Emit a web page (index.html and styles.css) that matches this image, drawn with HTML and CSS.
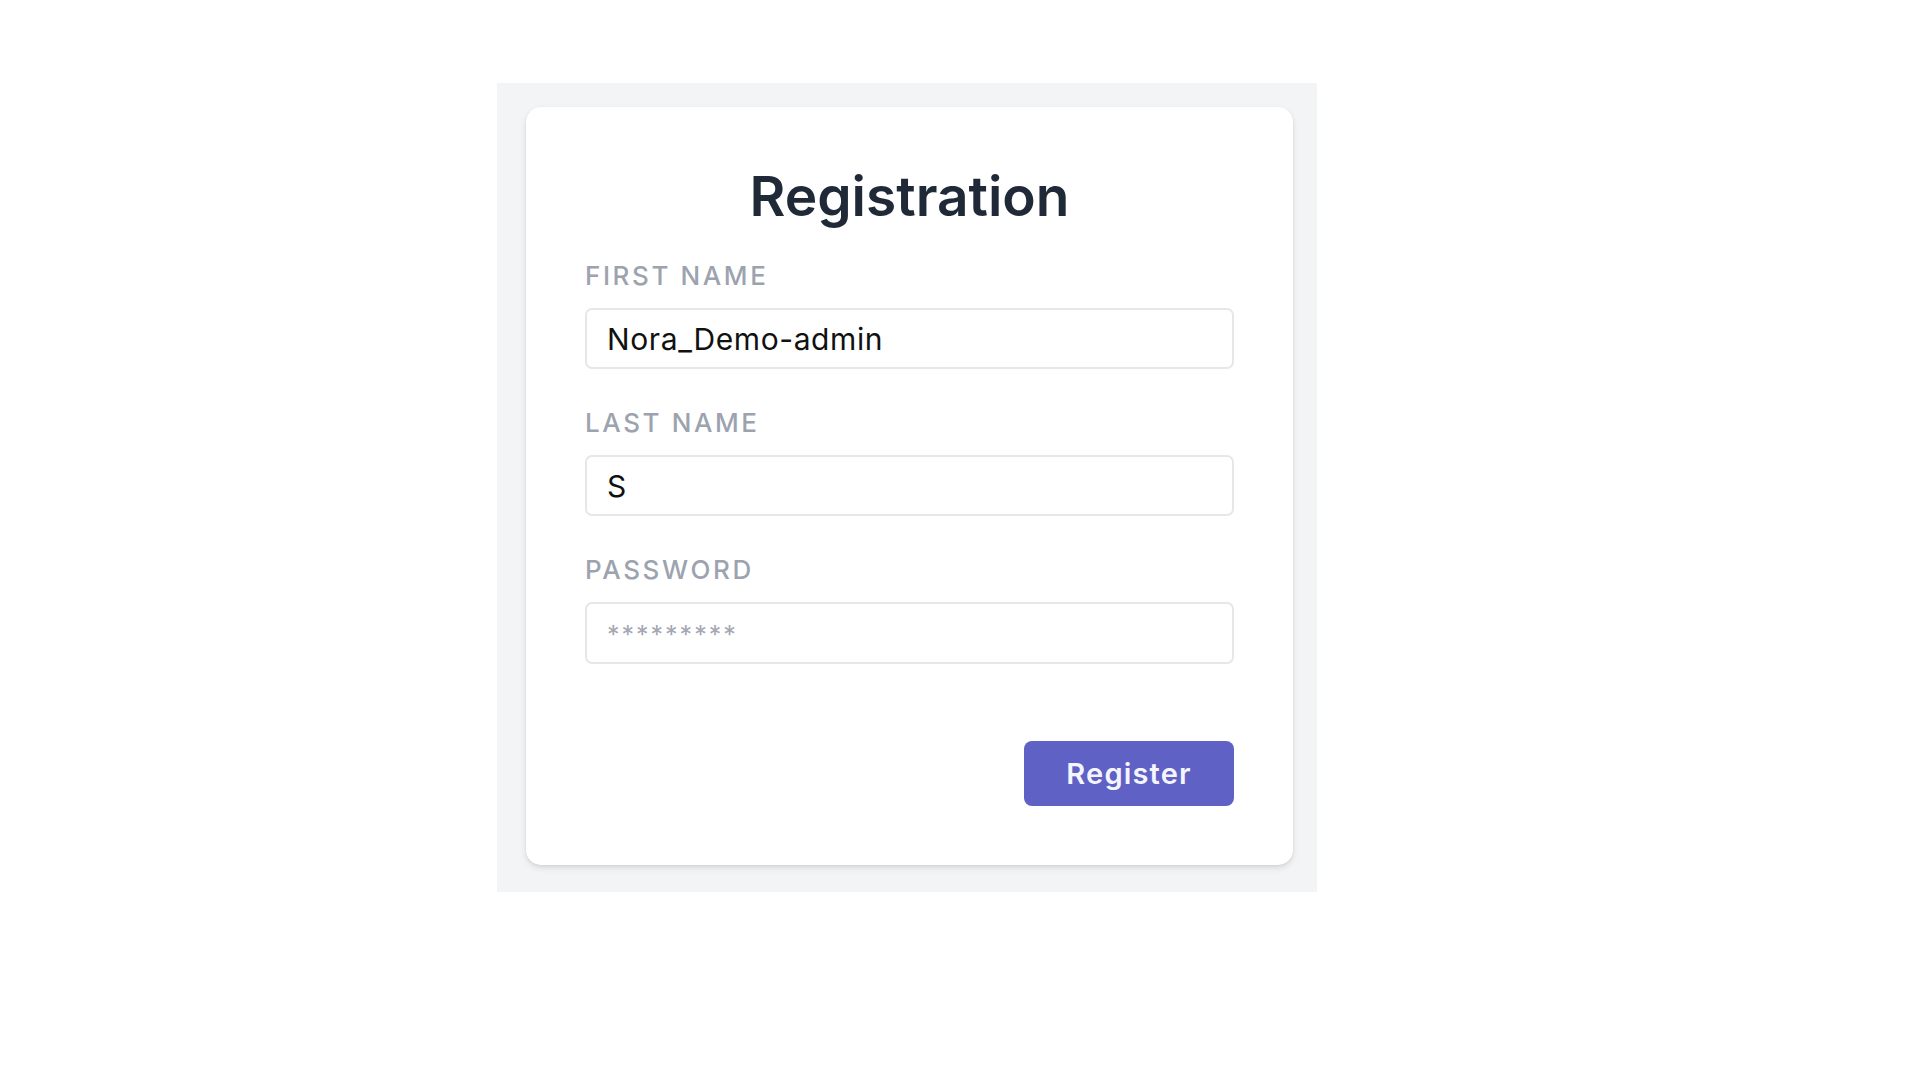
FILE: index.html
```html
<!DOCTYPE html>
<html lang="en">
<head>
<meta charset="utf-8">
<title>Registration</title>
<link rel="stylesheet" href="styles.css">
</head>
<body>
<div class="frame">
  <form class="card">
    <h1 class="title">Registration</h1>
    <div class="field">
      <label class="label" for="first">First name</label>
      <input class="input" id="first" type="text" value="Nora_Demo-admin">
    </div>
    <div class="field">
      <label class="label" for="last">Last name</label>
      <input class="input" id="last" type="text" value="S">
    </div>
    <div class="field">
      <label class="label" for="pw">Password</label>
      <input class="input pw" id="pw" type="text" placeholder="*********">
    </div>
    <div class="actions">
      <button class="btn" type="button">Register</button>
    </div>
  </form>
</div>
</body>
</html>
```
FILE: styles.css
```css
* { box-sizing: border-box; }
html, body { margin: 0; background: #ffffff; }
body {
  padding: 83px 0 0 497px;
  font-family: Inter, "Noto Sans", "Liberation Sans", sans-serif;
}
.frame {
  width: 820px;
  height: 809px;
  background: #f3f4f6;
  padding: 24px 23px 27px 29px;
}
.card {
  width: 767px;
  height: 758px;
  background: #ffffff;
  border-radius: 15px;
  box-shadow: 0 3px 6px rgba(0, 0, 0, 0.10), 0 1px 3px rgba(0, 0, 0, 0.06);
  padding: 57px 59px 59px 59px;
  display: flex;
  flex-direction: column;
}
.title {
  margin: 0;
  font-size: 55px;
  line-height: 65px;
  font-weight: 600;
  color: #1f2937;
  text-align: center;
}
.field {
  display: flex;
  flex-direction: column;
  gap: 16px;
  margin-top: 31px;
}
.field + .field { margin-top: 38px; }
.label {
  font-size: 26px;
  line-height: 32px;
  font-weight: 500;
  letter-spacing: 0.1em;
  text-transform: uppercase;
  color: #9ca3af;
}
.input {
  width: 100%;
  height: 61px;
  border: 2px solid #e5e7eb;
  border-radius: 7px;
  padding: 0 20px;
  font-family: Inter, "Noto Sans", "Liberation Sans", sans-serif;
  font-size: 30px;
  letter-spacing: 0.02em;
  color: #111111;
  background: #ffffff;
  outline: none;
}
.input::placeholder {
  color: #a3a8b3;
  opacity: 1;
  font-size: 25px;
  letter-spacing: 2px;
}
.pw { height: 62px; }
.actions {
  display: flex;
  justify-content: flex-end;
  margin-top: 77px;
}
.btn {
  width: 210px;
  height: 65px;
  border: none;
  border-radius: 8px;
  background: #5f61c4;
  color: #f5f5ff;
  font-family: Inter, "Noto Sans", "Liberation Sans", sans-serif;
  font-size: 29px;
  font-weight: 600;
  letter-spacing: 0.04em;
}
```
